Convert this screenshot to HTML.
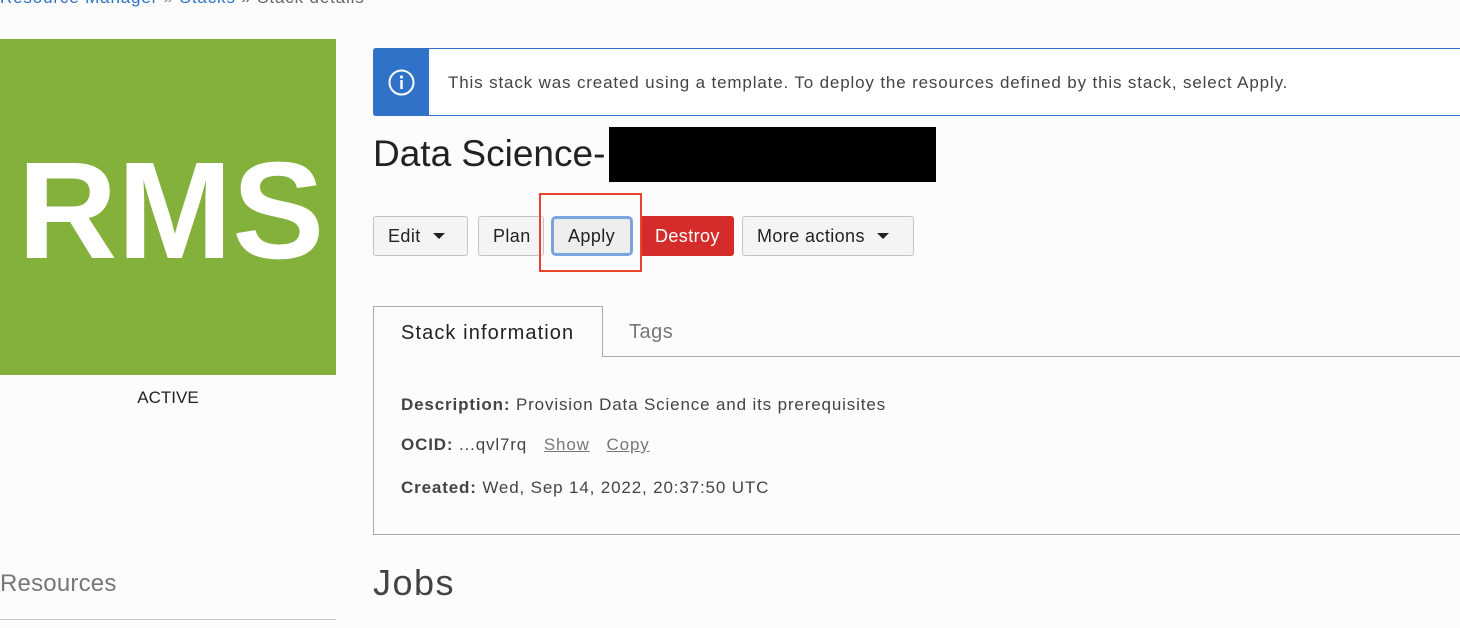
<!DOCTYPE html>
<html><head><meta charset="utf-8"><style>
*{margin:0;padding:0;box-sizing:border-box}
body{width:1460px;height:628px;overflow:hidden;background:#fcfcfc;font-family:"Liberation Sans",Arial,sans-serif;position:relative;color:#333}
.a{position:absolute;white-space:nowrap}
.btn{position:absolute;top:216px;height:40px;border:1px solid #c4c4c4;border-radius:3px;background:#f4f4f4;font-size:18px;color:#222;line-height:38px;padding-left:14px;letter-spacing:0.4px}
.car{display:inline-block;width:0;height:0;border-left:6px solid transparent;border-right:6px solid transparent;border-top:6px solid #222;vertical-align:middle;margin-left:12px;margin-top:-3px}
.t{font-size:17px;letter-spacing:0.85px}
</style></head><body>
<div class="a t" style="top:-12px;left:0;color:#2f72c8">Resource Manager <span style="color:#888">»</span> Stacks <span style="color:#666">» Stack details</span></div>
<div class="a" style="left:0;top:39px;width:336px;height:336px;background:#84b03c"></div>
<div class="a" style="left:0;top:121px;width:342px;text-align:center;font-size:138px;font-weight:bold;color:#fff;line-height:180px;letter-spacing:0px">RMS</div>
<div class="a" style="left:0;top:388px;width:336px;text-align:center;font-size:17px;color:#222">ACTIVE</div>
<div class="a" style="left:0;top:570px;font-size:24px;color:#777;font-weight:300;letter-spacing:0.2px">Resources</div>
<div class="a" style="left:0;top:619px;width:336px;height:1px;background:#c0c0c8"></div>

<div class="a" style="left:373px;top:48px;width:1100px;height:68px;border:1px solid #2f72c8;border-radius:3px;background:#fff"></div>
<div class="a" style="left:373px;top:48px;width:56px;height:68px;background:#2f72c8;border-radius:3px 0 0 3px"></div>
<svg class="a" style="left:388px;top:69px" width="27" height="27" viewBox="0 0 27 27"><circle cx="13.5" cy="13.5" r="12" fill="none" stroke="#fff" stroke-width="2"/><circle cx="13.5" cy="8" r="1.6" fill="#fff"/><rect x="12.3" y="11" width="2.4" height="9" fill="#fff"/></svg>
<div class="a t" style="left:448px;top:73px;color:#444">This stack was created using a template. To deploy the resources defined by this stack, select Apply.</div>

<div class="a" style="left:373px;top:133px;font-size:37px;color:#222">Data Science-</div>
<div class="a" style="left:609px;top:127px;width:327px;height:55px;background:#000"></div>

<div class="btn" style="left:373px;width:95px">Edit<span class="car"></span></div>
<div class="btn" style="left:478px;width:66px">Plan</div>
<div class="btn" style="left:551px;width:82px;border:3px solid #7ba3dc;border-radius:5px;background:#eee;padding-left:14px;line-height:34px">Apply</div>
<div class="btn" style="left:640px;width:94px;background:#d42b2b;border-color:#d42b2b;color:#fff">Destroy</div>
<div class="btn" style="left:742px;width:172px">More actions<span class="car"></span></div>
<div class="a" style="left:539px;top:193px;width:103px;height:79px;border:2px solid #e8432b"></div>

<div class="a" style="left:373px;top:306px;width:1100px;height:229px;border:1px solid #aaa;border-top:none"></div>
<div class="a" style="left:602px;top:356px;width:860px;height:1px;background:#aaa"></div>
<div class="a" style="left:373px;top:306px;width:230px;height:51px;border:1px solid #aaa;border-bottom:none;background:#fcfcfc"></div>
<div class="a" style="left:401px;top:322px;font-size:20px;color:#222;letter-spacing:1.1px">Stack information</div>
<div class="a" style="left:629px;top:321px;font-size:20px;color:#777;letter-spacing:0.5px">Tags</div>

<div class="a t" style="left:401px;top:395px;color:#444"><b>Description:</b> Provision Data Science and its prerequisites</div>
<div class="a t" style="left:401px;top:435px;color:#444"><b>OCID:</b> ...qvl7rq &nbsp;&nbsp;<u style="color:#777">Show</u> &nbsp;&nbsp;<u style="color:#777">Copy</u></div>
<div class="a t" style="left:401px;top:478px;color:#444"><b>Created:</b> Wed, Sep 14, 2022, 20:37:50 UTC</div>
<div class="a" style="left:373px;top:562px;font-size:36px;color:#444;letter-spacing:1.5px">Jobs</div>
</body></html>
